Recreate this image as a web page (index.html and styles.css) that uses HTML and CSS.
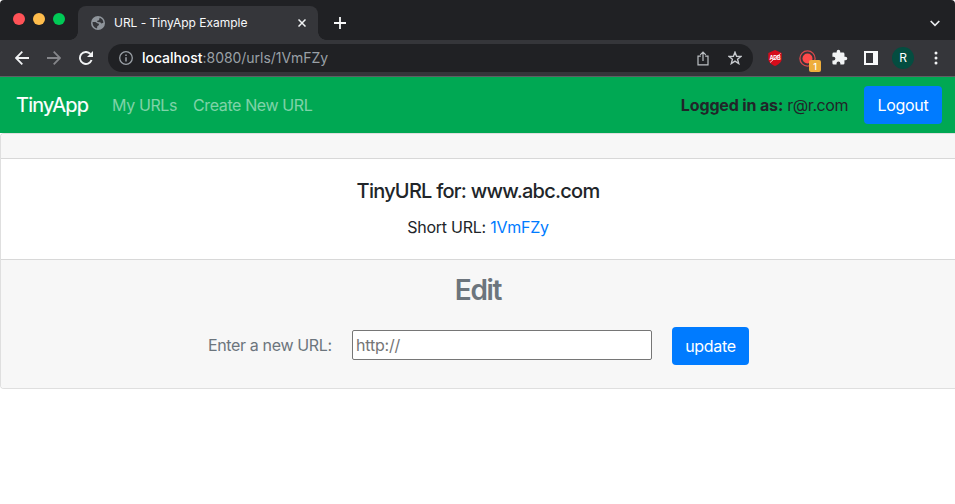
FILE: index.html
```html
<!DOCTYPE html>
<html lang="en">
<head>
<meta charset="utf-8">
<title>URL - TinyApp Example</title>
<link rel="stylesheet" href="styles.css">
</head>
<body>
<div class="window">
  <div class="tabstrip">
    <div class="lights"><i class="light red"></i><i class="light yellow"></i><i class="light green"></i></div>
    <div class="tab">
      <svg class="globe" width="14" height="14" viewBox="0 0 14 14"><circle cx="7" cy="7" r="7" fill="#8f959b"/><path d="M1.600 6 L4.500 6.100 L6.300 7.300 L7.800 7.800 L8 9 L6.300 10.200 L6 12.400 C3.300 11.900 1.400 9.400 1.600 6 Z M8.600 1.700 C10.800 2.300 12.400 4.400 12.400 6.800 L10.400 7.600 L9.200 6.300 L6.300 6 L6.200 4.700 L8 4.200 Z" fill="#35363a"/></svg>
      <span class="tab-title">URL - TinyApp Example</span>
      <svg class="close" width="8" height="8" viewBox="0 0 8 8"><path d="M.5 .5L7.5 7.5M7.5 .5L.5 7.5" stroke="#f1f3f4" stroke-width="1.5"/></svg>
    </div>
    <svg class="plus" width="12" height="12" viewBox="0 0 12 12"><path d="M6 0V12M0 6H12" stroke="#f8f9fa" stroke-width="1.8"/></svg>
    <svg class="chevron" width="10" height="7" viewBox="0 0 10 7"><path d="M.7 1L5 5.3L9.3 1" fill="none" stroke="#e8eaed" stroke-width="1.7"/></svg>
  </div>
  <div class="toolbar">
    <svg class="back" width="14" height="14" viewBox="0 0 14 14"><path d="M14 7H1.2M7.3 .7L1 7L7.3 13.3" fill="none" stroke="#f1f3f4" stroke-width="1.8"/></svg>
    <svg class="forward" width="14" height="14" viewBox="0 0 14 14"><path d="M0 7H12.8M6.7 .7L13 7L6.7 13.3" fill="none" stroke="#85868a" stroke-width="1.8"/></svg>
    <svg class="reload" width="14" height="14" viewBox="0 0 14 14"><path d="M12.6 9A6 6 0 1 1 11.4 2.9" fill="none" stroke="#f1f3f4" stroke-width="1.9"/><path d="M14 0V6H8Z" fill="#f1f3f4"/></svg>
    <div class="omnibox">
      <svg width="14" height="14" viewBox="0 0 14 14"><circle cx="7" cy="7" r="6.3" fill="none" stroke="#9aa0a6" stroke-width="1.3"/><path d="M7 6.2V10.4M7 3.5V5" stroke="#9aa0a6" stroke-width="1.5"/></svg>
      <span class="address"><b>localhost</b>:8080/urls/1VmFZy</span>
      <svg class="share" width="12" height="15" viewBox="0 0 12 15"><path d="M3.8 5.2H1V13.8H11V5.2H8.2M6 10V1.2M3.2 3.8L6 1L8.800 3.8" fill="none" stroke="#bcc0c4" stroke-width="1.2"/></svg>
      <svg width="14" height="14" viewBox="0 0 24 24"><path d="M12 2L14.7 9L22.3 9.4L16.4 14.2L18.4 21.6L12 17.4L5.6 21.6L7.6 14.2L1.7 9.4L9.3 9Z" fill="none" stroke="#c8cbcf" stroke-width="2.3"/></svg>
    </div>
    <svg class="ads" width="14" height="16" viewBox="0 0 14 16"><path d="M7 0L13.7 3V9C13.7 12 10.5 14.500 7 16C3.5 14.5 .3 12 .3 9V3Z" fill="#d60c1b"/><text x="7" y="10.300" class="ads-text">ADB</text><path d="M2 12.5L12.5 3.5" stroke="#fff" stroke-width=".8"/></svg>
    <div class="record">
      <svg width="17" height="17" viewBox="0 0 17 17"><circle cx="8.5" cy="8.5" r="7.6" fill="none" stroke="#d9484b" stroke-width="1.3"/><circle cx="8.5" cy="8.5" r="5" fill="#ff4a4a"/></svg>
      <span class="badge">1</span>
    </div>
    <svg class="puzzle" width="17" height="17" viewBox="0 0 24 24"><path d="M20.5 11H19V7a2 2 0 0 0-2-2h-4V3.500a2.500 2.500 0 0 0-5 0V5H4a2 2 0 0 0-2 2v3.800h1.500a2.700 2.700 0 0 1 0 5.400H2V20a2 2 0 0 0 2 2h3.800v-1.500a2.700 2.700 0 0 1 5.400 0V22H17a2 2 0 0 0 2-2v-4h1.500a2.500 2.500 0 0 0 0-5z" fill="#f1f3f4"/></svg>
    <svg class="panel" width="14" height="14" viewBox="0 0 14 14"><path d="M0 0H14V14H0ZM2 2V12H9V2Z" fill="#f8f9fa" fill-rule="evenodd"/></svg>
    <span class="avatar">R</span>
    <svg class="dots" width="4" height="14" viewBox="0 0 4 14"><g fill="#f1f3f4"><circle cx="2" cy="2" r="1.5"/><circle cx="2" cy="7" r="1.5"/><circle cx="2" cy="12" r="1.5"/></g></svg>
  </div>
  <nav class="navbar">
    <a class="brand">TinyApp</a>
    <a class="link my-urls">My URLs</a>
    <a class="link create">Create New URL</a>
    <span class="login"><b>Logged in as:</b> <span class="email">r@r.com</span></span>
    <button class="btn logout">Logout</button>
  </nav>
  <main class="card">
    <div class="card-header"></div>
    <div class="card-body">
      <h5>TinyURL for: www.abc.com</h5>
      <p>Short URL: <a>1VmFZy</a></p>
    </div>
    <div class="card-footer">
      <h3>Edit</h3>
      <form>
        <label for="url">Enter a new URL:</label>
        <input id="url" type="text" placeholder="http://">
        <button class="btn update" type="button">update</button>
      </form>
    </div>
  </main>
</div>
</body>
</html>
```
FILE: styles.css
```css
* { box-sizing: border-box; }
body {
  margin: 0;
  background: #fff;
  color: #212529;
  font: 16px/24px Inter, "Liberation Sans", sans-serif;
  letter-spacing: -0.3px;
  overflow: hidden;
}
svg { display: block; flex: none; }
.window { height: 504px; }
.tabstrip { display: flex; height: 40px; background: #202124; border-radius: 4px 4px 0 0; }
.lights { display: flex; gap: 8px; padding: 13px 0 0 13px; width: 78px; }
.light { width: 12px; height: 12px; border-radius: 50%; }
.red { background: #ff5257; }
.yellow { background: #ffbd4c; }
.green { background: #00ca56; }
.tab {
  display: flex;
  align-items: center;
  width: 240px;
  height: 34px;
  margin-top: 6px;
  padding: 0 12px 0 13px;
  background: #35363a;
  border-radius: 8px 8px 0 0;
  position: relative;
}
.tab::before, .tab::after {
  content: "";
  position: absolute;
  bottom: 0;
  width: 8px;
  height: 8px;
}
.tab::before { left: -8px; background: radial-gradient(circle at 0 0, transparent 7.5px, #35363a 8px); }
.tab::after { right: -8px; background: radial-gradient(circle at 100% 0, transparent 7.5px, #35363a 8px); }
.tab-title { margin-left: 9px; color: #f8f9fa; font-size: 12px; letter-spacing: -0.02px; white-space: nowrap; }
.close { margin-left: auto; }
.plus { margin: 17px 0 0 16px; }
.chevron { margin: 20px 15px 0 auto; }
.toolbar {
  display: flex;
  align-items: center;
  height: 37px;
  padding-left: 15px;
  background: #35363a;
  border-bottom: 1px solid #5f6064;
}
.forward, .reload { margin-left: 18px; }
.omnibox {
  display: flex;
  align-items: center;
  width: 645px;
  height: 28px;
  margin-left: 15px;
  padding: 0 11px;
  background: #202124;
  border-radius: 14px;
}
.address { margin-left: 9px; color: #9aa0a6; font-size: 14px; letter-spacing: -0.04px; }
.address b { color: #fff; font-weight: 500; }
.share { margin: 0 19px 0 auto; }
.ads { margin-left: 15px; }
.ads-text { fill: #fff; font-size: 5.5px; font-weight: 700; text-anchor: middle; letter-spacing: -0.2px; }
.record { position: relative; margin-left: 17px; }
.badge {
  position: absolute;
  left: 10px;
  top: 10px;
  width: 12px;
  height: 12px;
  border-radius: 2px;
  background: #eeae3c;
  color: #fff;
  font-size: 9px;
  font-weight: 500;
  line-height: 13px;
  text-align: center;
  letter-spacing: 0;
}
.puzzle { margin: 0 0 2px 15px; }
.panel { margin-left: 16px; }
.avatar {
  width: 22px;
  height: 22px;
  margin-left: 14px;
  border-radius: 50%;
  background: #044d40;
  color: #fff;
  font-size: 12px;
  line-height: 22px;
  text-align: center;
}
.dots { margin-left: 20px; }
.navbar { display: flex; align-items: center; height: 56px; padding: 0 13px 0 16px; background: #00a853; }
.brand { width: 96px; color: #fff; font-size: 20px; letter-spacing: -0.75px; -webkit-text-stroke: .2px #fff; white-space: nowrap; }
.link { color: rgba(255, 255, 255, .5); letter-spacing: -0.38px; white-space: nowrap; }
.my-urls { width: 81px; }
.login { margin-left: auto; margin-right: 16px; white-space: nowrap; }
.login b { font-weight: 700; letter-spacing: -0.15px; }
.email { letter-spacing: -0.45px; }
.btn {
  height: 38px;
  padding: 0;
  border: 0;
  border-radius: 4px;
  background: #007bff;
  color: #fff;
  font: inherit;
  letter-spacing: -0.3px;
}
.logout { width: 78px; }
.card {
  height: 256px;
  border: 1px solid #dfdfdf;
  border-right: 0;
  border-radius: 4px 0 0 4px;
  background: #fff;
  text-align: center;
  overflow: hidden;
}
.card-header { height: 25px; background: #f7f7f7; border-bottom: 1px solid #d8d8d8; }
.card-body { height: 100px; padding-top: 20px; }
h5 { margin: 0 0 12px; font-size: 20px; line-height: 24px; font-weight: 500; letter-spacing: -0.76px; }
p { margin: 0; letter-spacing: -0.25px; }
p a { color: #007bff; }
.card-footer { height: 129px; padding-top: 13px; background: #f7f7f7; border-top: 1px solid #d8d8d8; color: #6c757d; }
h3 { margin: 0 0 20px; font-size: 28px; line-height: 34px; font-weight: 600; letter-spacing: -1.3px; }
form { display: flex; align-items: center; padding-left: 207px; }
label { width: 124px; margin-bottom: 2px; letter-spacing: -0.36px; white-space: nowrap; text-align: left; }
input {
  width: 300px;
  height: 30px;
  margin: 0 20px 2px;
  padding: 1px 3px;
  border: 1px solid #767676;
  border-radius: 2px;
  background: #fff;
  font: inherit;
  letter-spacing: -0.2px;
}
input::placeholder { color: #757575; }
.update { width: 77px; }
```
